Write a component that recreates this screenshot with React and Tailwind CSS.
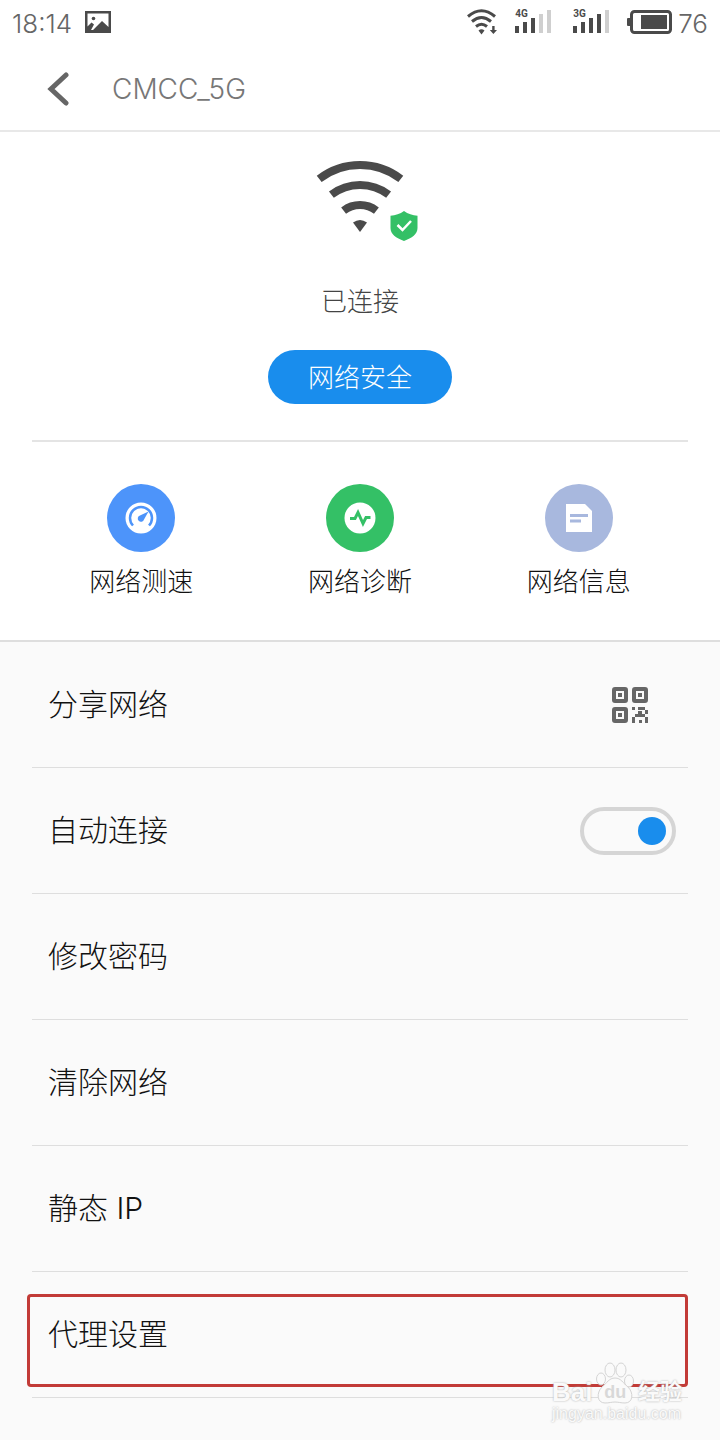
import { useState } from "react";

const rows = ["分享网络", "自动连接", "修改密码", "清除网络", "静态 IP", "代理设置"];

function Signal({ label, bars }) {
  const heights = [7, 11, 15, 19, 23];
  return (
    <div className="relative h-6 w-9">
      <span className="absolute -top-px left-0 font-['Roboto',sans-serif] text-[10px] leading-[10px] font-bold text-[#4a4a4a]">
        {label}
      </span>
      <svg viewBox="0 0 36 24" className="h-6 w-9">
        {heights.map((h, i) => (
          <rect
            key={i}
            x={i * 8}
            y={23 - h}
            width="4"
            height={h}
            fill={i < bars ? "#4a4a4a" : "#cfcfcf"}
          />
        ))}
      </svg>
    </div>
  );
}

function StatusBar() {
  return (
    <div className="flex h-11 items-center justify-between px-3 text-[26px] leading-10 text-[#666]">
      <div className="flex items-center gap-3">
        <span className="pt-1">18:14</span>
        <svg viewBox="0 0 28 22" className="h-[22px] w-7">
          <path
            fill="#4a4a4a"
            fillRule="evenodd"
            d="M1 0h26v22H1zM3.500 2.500v13l4-4 2.500 2-3 5.500h2l9-9 6.500 6V2.500z"
          />
          <circle cx="9.500" cy="7.500" r="1.800" fill="#4a4a4a" />
        </svg>
      </div>
      <div className="flex items-center">
        <svg viewBox="0 0 30 26" className="mr-[18px] h-[26px] w-[30px]">
          <g fill="none" stroke="#4a4a4a" strokeWidth="3">
            <path d="M1 7.500Q14.500 -4 28 7.500" />
            <path d="M5 12.500Q14.500 4.500 24 12.500" />
            <path d="M9 17.500Q14.500 13 20 17.500" />
          </g>
          <path fill="#4a4a4a" d="M11.500 21.500q3-2.500 6 0l-3 4zM25.200 17h2.400v4H30l-3.600 4-3.600-4h2.400z" />
        </svg>
        <Signal label="4G" bars={3} />
        <div className="w-[22px]" />
        <Signal label="3G" bars={4} />
        <svg viewBox="0 0 45 24" className="mr-1.5 ml-[18px] h-6 w-[45px]">
          <rect x="4.500" y="1.500" width="39" height="21" rx="3" fill="none" stroke="#4a4a4a" strokeWidth="3" />
          <rect x="0" y="8" width="4" height="8" rx="1" fill="#4a4a4a" />
          <rect x="14" y="5" width="26" height="14" fill="#4a4a4a" />
        </svg>
        <span className="pt-1">76</span>
      </div>
    </div>
  );
}

function WifiSafe() {
  return (
    <svg viewBox="0 0 120 84" className="h-[84px] w-[120px]">
      <g fill="none" stroke="#4a4a4a" strokeWidth="8">
        <path d="M19.200 20.900A67 67 0 0 1 100.800 20.900" />
        <path d="M31.400 36.700A47 47 0 0 1 88.600 36.700" />
        <path d="M43.600 52.600A27 27 0 0 1 76.400 52.600" />
      </g>
      <path fill="#4a4a4a" d="M53 64.500Q60 59.500 67 64.500L60 74z" />
      <path
        fill="#34c066"
        d="M104 53c4 3 8.500 4.300 13.500 4.800v12.200c0 6-5.500 10-13.500 13-8-3-13.500-7-13.500-13V57.800c5-.5 9.500-1.800 13.500-4.800z"
      />
      <path fill="none" stroke="#fff" strokeWidth="2.500" d="M97.500 67l5 5 8.500-9" />
    </svg>
  );
}

function SpeedIcon() {
  return (
    <svg viewBox="0 0 68 68" className="size-[68px]">
      <circle cx="34" cy="34" r="34" fill="#4d94fa" />
      <circle cx="34" cy="34" r="15.500" fill="#fff" />
      <path
        fill="none"
        stroke="#4d94fa"
        strokeWidth="2.500"
        d="M26 41.500A11 11 0 1 1 42 41.500"
      />
      <path fill="#4d94fa" d="M41.500 27.500L37 35.500a3.200 3.200 0 1 1-4-4z" />
    </svg>
  );
}

function DiagnoseIcon() {
  return (
    <svg viewBox="0 0 68 68" className="size-[68px]">
      <circle cx="34" cy="34" r="34" fill="#34c066" />
      <circle cx="34" cy="34" r="15.500" fill="#fff" />
      <path
        fill="none"
        stroke="#34c066"
        strokeWidth="3"
        d="M24 34.500h5l3-6 5 11 3-6h4.500"
      />
    </svg>
  );
}

function InfoIcon() {
  return (
    <svg viewBox="0 0 68 68" className="size-[68px]">
      <circle cx="34" cy="34" r="34" fill="#a8b8de" />
      <path fill="#fff" d="M21 20h19l7 7v21H21z" />
      <path fill="#a8b8de" d="M25 30h18v3H25zM25 35.500h11v3H25z" />
    </svg>
  );
}

function QrIcon() {
  return (
    <svg viewBox="0 0 36 36" className="size-9">
      <g fill="none" stroke="#666" strokeWidth="4">
        <rect x="2" y="2" width="12" height="12" rx="1" />
        <rect x="22" y="2" width="12" height="12" rx="1" />
        <rect x="2" y="22" width="12" height="12" rx="1" />
      </g>
      <path
        fill="#666"
        d="M6 6h4v4H6zM26 6h4v4h-4zM6 26h4v4H6zM20 20h3v3h-3zM26 20h7v3h-7zM33 23h3v4h-3zM23 27h10v3H23zM26 24h4v3h-4zM20 30h3v6h-3zM27 33h3v3h-3zM33 30h3v6h-3z"
      />
    </svg>
  );
}

const tools = [
  { name: "网络测速", icon: <SpeedIcon /> },
  { name: "网络诊断", icon: <DiagnoseIcon /> },
  { name: "网络信息", icon: <InfoIcon /> },
];

function Watermark() {
  return (
    <div className="pointer-events-none absolute right-[38px] bottom-4 w-[130px] font-['Liberation_Sans','Noto_Sans_CJK_SC',sans-serif] text-[#fafafa] [text-shadow:0_0_2px_#aaa]">
      <div className="flex h-10 items-end justify-between font-bold">
        <span className="text-[26px] leading-6">Bai</span>
        <div className="relative">
          <svg viewBox="0 0 38 42" className="h-[42px] w-[38px]">
            <g fill="#fafafa" stroke="#d4d4d4">
              <ellipse cx="5" cy="17" rx="4.500" ry="6" />
              <ellipse cx="14" cy="8" rx="5" ry="7" />
              <ellipse cx="25" cy="8" rx="5" ry="7" />
              <ellipse cx="33" cy="19" rx="4.500" ry="6" />
              <path d="M19 16c6 0 8 5 13 9 6 6 5 16-3 16-4 0-7-1-10-1s-6 1-10 1c-8 0-9-10-3-16 5-4 7-9 13-9z" />
            </g>
          </svg>
          <span className="absolute inset-x-0 bottom-0.5 text-center text-lg leading-5 text-[#d8d8d8] [text-shadow:none]">
            du
          </span>
        </div>
        <span className="text-[22px] leading-6">经验</span>
      </div>
      <div className="text-base leading-5">jingyan.baidu.com</div>
    </div>
  );
}

function App() {
  const [auto, setAuto] = useState(true);

  return (
    <div className="relative min-h-screen bg-[#fafafa] font-['Inter','Noto_Sans_CJK_SC',sans-serif] font-light text-[#111]">
      <div className="border-b-2 border-[#dedede] bg-white">
        <StatusBar />
        <header className="flex h-22 items-center gap-10 border-b-2 border-[#e8e8e8] px-11 pt-1">
          <button aria-label="返回" className="flex w-7 justify-center">
            <svg viewBox="0 0 22 34" className="h-[34px] w-[22px]">
              <path
                d="M19 3L4 17l15 14"
                fill="none"
                stroke="#666"
                strokeWidth="5"
                strokeLinecap="round"
              />
            </svg>
          </button>
          <h1 className="text-[28px] leading-9 text-[#777]">CMCC_5G</h1>
        </header>
        <section className="px-8">
          <div className="flex flex-col items-center border-b-2 border-[#e4e4e4] pt-[26px] pb-9">
            <WifiSafe />
            <p className="mt-10 text-[26px] leading-10 text-[#444]">已连接</p>
            <button className="mt-7 h-[54px] rounded-full bg-[#198ded] px-10 text-[26px] text-white">
              网络安全
            </button>
          </div>
          <div className="grid grid-cols-3 pt-[42px] pb-[38px]">
            {tools.map((tool) => (
              <button key={tool.name} className="flex flex-col items-center gap-2.5">
                {tool.icon}
                <span className="text-[26px] leading-10">{tool.name}</span>
              </button>
            ))}
          </div>
        </section>
      </div>
      <ul className="px-8 pb-10">
        {rows.map((row, i) => (
          <li
            key={row}
            className="relative flex h-[126px] items-center justify-between border-b border-[#dedede] px-4 text-[30px]"
          >
            {i === 1 ? (
              <label htmlFor="auto">{row}</label>
            ) : (
              <button className="flex-1 text-left">{row}</button>
            )}
            {i === 0 && (
              <div className="mr-6">
                <QrIcon />
              </div>
            )}
            {i === 1 && (
              <input
                id="auto"
                type="checkbox"
                role="switch"
                checked={auto}
                onChange={(e) => setAuto(e.target.checked)}
                className="-mr-1 flex h-12 w-24 appearance-none items-center rounded-full border-4 border-[#d5d5d5] px-1.5 before:size-7 before:rounded-full before:bg-[#aaa] checked:justify-end checked:before:bg-[#198ded]"
              />
            )}
            {i === 5 && (
              <div className="pointer-events-none absolute top-[22px] right-0 bottom-2.5 -left-[5px] rounded-sm border-3 border-[#c23b37]" />
            )}
          </li>
        ))}
      </ul>
      <Watermark />
    </div>
  );
}

export default App;
